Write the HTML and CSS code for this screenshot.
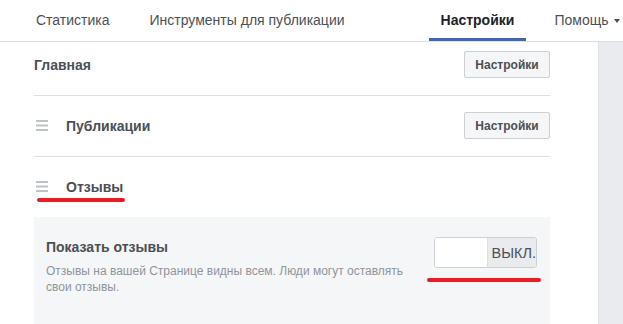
FILE: index.html
```html
<!DOCTYPE html>
<html lang="ru">
<head>
<meta charset="utf-8">
<link rel="stylesheet" href="styles.css">
</head>
<body>
<nav class="nav">
  <a class="tab tab-stat">Статистика</a>
  <a class="tab tab-tools">Инструменты для публикации</a>
  <a class="tab tab-settings active">Настройки</a>
  <a class="tab tab-help">Помощь<span class="caret"></span></a>
</nav>
<div class="page">
  <main class="main">
    <div class="row row-first">
      <span class="row-title">Главная</span>
      <button class="btn">Настройки</button>
    </div>
    <div class="row">
      <span class="row-label">
        <svg class="grip" width="12" height="11" viewBox="0 0 12 11"><rect x="0" y="0" width="12" height="2"/><rect x="0" y="4.5" width="12" height="2"/><rect x="0" y="9" width="12" height="2"/></svg>
        <span class="row-title">Публикации</span>
      </span>
      <button class="btn">Настройки</button>
    </div>
    <div class="row row-open">
      <span class="row-label">
        <svg class="grip" width="12" height="11" viewBox="0 0 12 11"><rect x="0" y="0" width="12" height="2"/><rect x="0" y="4.5" width="12" height="2"/><rect x="0" y="9" width="12" height="2"/></svg>
        <span class="row-title">Отзывы</span>
      </span>
      <span class="mark mark-title"></span>
    </div>
    <section class="panel">
      <div class="panel-text">
        <div class="panel-title">Показать отзывы</div>
        <div class="panel-desc">Отзывы на вашей Странице видны всем. Люди могут оставлять свои отзывы.</div>
      </div>
      <div class="toggle-wrap">
        <div class="toggle">
          <span class="toggle-on"></span>
          <span class="toggle-off">ВЫКЛ.</span>
        </div>
        <span class="mark mark-toggle"></span>
      </div>
    </section>
  </main>
  <aside class="side"></aside>
</div>
</body>
</html>
```

FILE: styles.css
```css
* { box-sizing: border-box; }
html, body { margin: 0; padding: 0; }
body {
  width: 623px;
  height: 324px;
  overflow: hidden;
  background: #fff;
  font-family: "Liberation Sans", Arial, sans-serif;
  color: #4b4f56;
}
.nav {
  display: flex;
  height: 42px;
  border-bottom: 1px solid #dddfe2;
  align-items: stretch;
}
.tab {
  display: flex;
  align-items: center;
  padding: 2px 12px 0;
  font-size: 14px;
  color: #4b4f56;
  border-bottom: 3px solid transparent;
  white-space: nowrap;
}
.tab-stat { margin-left: 24px; }
.tab-tools { margin-left: 16px; }
.tab-settings { margin-left: 72px; }
.tab-help { margin-left: 16px; padding-right: 0; }
.active {
  font-weight: bold;
  color: #1d2129;
  border-bottom-color: #4267b2;
}
.caret {
  display: inline-block;
  width: 0;
  height: 0;
  margin-left: 6px;
  margin-top: 1px;
  border-left: 3px solid transparent;
  border-right: 3px solid transparent;
  border-top: 4px solid #4b4f56;
}
.page {
  display: flex;
  height: 282px;
}
.main {
  width: 598px;
  padding-left: 34px;
  padding-right: 48px;
}
.side {
  flex: 1;
  background: #e9ebee;
  border-left: 1px solid #dddfe2;
}
.row {
  position: relative;
  display: flex;
  align-items: center;
  justify-content: space-between;
  height: 61px;
  padding: 16px 0 17px;
  border-bottom: 1px solid #dddfe2;
}
.row-first {
  height: 54px;
  padding-top: 9px;
}
.row-open {
  height: 60px;
  border-bottom: none;
}
.row-label {
  display: flex;
  align-items: center;
}
.grip {
  margin-left: 2px;
  margin-right: 18px;
  fill: #bec3c9;
}
.row-title {
  font-size: 14px;
  font-weight: bold;
  color: #4b4f56;
}
.btn {
  height: 27px;
  width: 86px;
  padding: 0;
  border: 1px solid #ccd0d5;
  border-radius: 2px;
  background: #f5f6f7;
  font-family: "Liberation Sans", Arial, sans-serif;
  font-size: 12px;
  font-weight: bold;
  color: #4b4f56;
}
.mark {
  position: absolute;
  height: 4px;
  border-radius: 2px;
  background: #ec1c24;
}
.mark-title {
  left: 3px;
  top: 41px;
  width: 88px;
}
.panel {
  display: flex;
  align-items: flex-start;
  background: #f5f6f7;
  height: 107px;
  padding: 20px 13px 0 12px;
}
.panel-text {
  flex: 1;
  padding-top: 1px;
  margin-right: 30px;
}
.panel-title {
  font-size: 14px;
  line-height: 18px;
  font-weight: bold;
  color: #4b4f56;
}
.panel-desc {
  margin-top: 7px;
  font-size: 12px;
  line-height: 16px;
  color: #90949c;
}
.toggle-wrap {
  position: relative;
}
.toggle {
  display: flex;
  width: 103px;
  height: 31px;
  border: 1px solid #ccd0d5;
  border-radius: 3px;
  overflow: hidden;
}
.toggle-on {
  width: 53px;
  background: #fff;
  border-right: 1px solid #dddfe2;
}
.toggle-off {
  flex: 1;
  display: flex;
  align-items: center;
  padding-left: 4px;
  background: #e9ebee;
  font-size: 14.5px;
  color: #4b4f56;
}
.mark-toggle {
  left: -7px;
  top: 41px;
  width: 114px;
}
```
